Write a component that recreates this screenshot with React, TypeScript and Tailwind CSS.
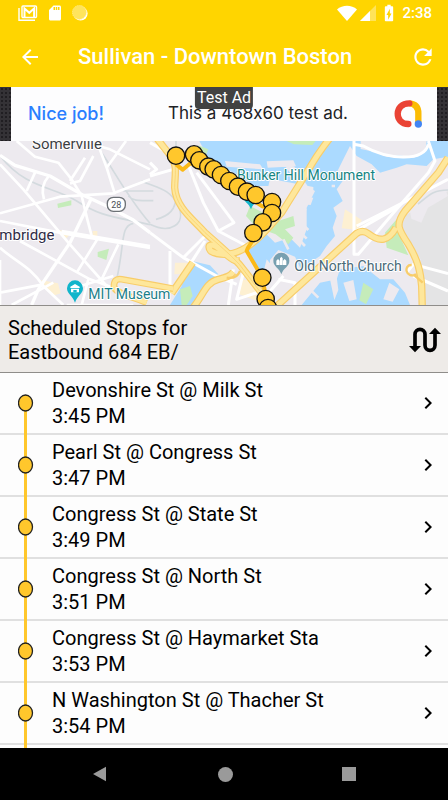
import React from 'react';
import { MdArrowBack, MdRefresh, MdChevronRight, MdSdCard, MdBatteryChargingFull } from 'react-icons/md';

interface Stop {
  name: string;
  time: string;
}

const stops: Stop[] = [
  { name: 'Devonshire St @ Milk St', time: '3:45 PM' },
  { name: 'Pearl St @ Congress St', time: '3:47 PM' },
  { name: 'Congress St @ State St', time: '3:49 PM' },
  { name: 'Congress St @ North St', time: '3:51 PM' },
  { name: 'Congress St @ Haymarket Sta', time: '3:53 PM' },
  { name: 'N Washington St @ Thacher St', time: '3:54 PM' },
];

const markers = [
  [78, 59], [132, 55], [148, 73], [175, 92], [191, 100], [213, 117], [238, 135], [264, 152],
  [291, 167], [317, 177], [366, 198], [366, 231], [338, 259], [310, 291], [337, 425], [347, 489], [354, 516],
];

const highways = [
  'M15 0 L62 60 C84 85 74 120 74 155 C78 215 130 250 165 290 C205 325 240 355 268 385 C300 425 335 470 370 520',
  'M545 0 C520 30 490 75 470 110 L395 230 C355 275 320 320 275 342 C240 360 205 358 182 345 C168 325 185 318 215 345 C240 365 262 385 258 365',
  'M125 520 C160 480 165 440 205 430 C230 424 240 420 250 408',
  'M65 472 L128 380',
  'M375 515 L620 292 Q638 280 655 293 C690 320 715 315 738 275',
  'M894 65 L865 110 L765 225 C735 265 745 280 775 325 C805 375 812 410 815 450 L817 520',
];

const leftHighways = [
  'M342 455 Q340 425 365 430 L465 448 L520 458',
  'M342 455 C355 475 390 480 440 500',
];

function StatusBar() {
  return (
    <div className="flex h-[26px] items-center justify-between pl-[18px] pr-4 text-white">
      <div className="flex items-center gap-2">
        <svg viewBox="0 0 20 16" className="h-4 w-5" fill="none" stroke="currentColor">
          <path d="M1 3v12.2H17" strokeWidth="1.4" />
          <rect x="4" y="1" width="14.5" height="11.5" rx="1" strokeWidth="1.4" />
          <path d="M6.5 12V3.5l4.8 4.3 4.8-4.3V12" strokeWidth="2" />
        </svg>
        <MdSdCard className="size-[18px]" />
        <svg viewBox="0 0 16 16" className="size-4">
          <circle cx="8.6" cy="8.6" r="7" fill="#fff" />
          <circle cx="7.4" cy="7.4" r="7" fill="#ffe45c" stroke="#ffed96" strokeDasharray="1 1" />
        </svg>
      </div>
      <div className="flex items-center gap-[3px]">
        <svg viewBox="0 0 20 16" className="h-4 w-5" fill="currentColor">
          <path d="M0 4.5C5.5-.4 14.5-.4 20 4.5L10 16z" />
        </svg>
        <svg viewBox="0 0 16 16" className="size-4" fill="currentColor">
          <path d="M16 0v16H0z" opacity=".35" />
          <path d="M10 6v10H0z" />
        </svg>
        <MdBatteryChargingFull className="size-5" />
        <span className="text-[15px] font-medium leading-6">2:38</span>
      </div>
    </div>
  );
}

function TestAd() {
  return (
    <div className="bg-[#343236] bg-[radial-gradient(#201e22_1px,transparent_1px)] bg-[length:4px_4px] px-[11px]">
      <div className="relative flex h-[54px] items-center bg-[#fdfdfe] pl-[17px] pr-[15px] font-['Inter',sans-serif] [font-feature-settings:'calt'_0]">
        <span className="text-lg font-medium text-[#2a7fff]">Nice job!</span>
        <span className="ml-16 flex-1 text-[17px] text-[#202124]">This a 468x60 test ad.</span>
        <svg viewBox="0 0 84 84" className="size-7" fill="none" strokeWidth="19">
          <path d="M46 10 Q73 12 73 40 V66" stroke="#fbbc04" />
          <path d="M46 10 C0 10 0 72 43 72" stroke="#ea4335" strokeLinecap="round" />
          <circle cx="73" cy="72" r="11" fill="#4285f4" />
        </svg>
        <span className="absolute left-1/2 top-0 -translate-x-1/2 whitespace-nowrap rounded-b bg-[#424242] px-0.5 font-['Roboto',sans-serif] text-base leading-[22px] text-white">
          Test Ad
        </span>
      </div>
    </div>
  );
}

function RouteMap() {
  return (
    <svg
      viewBox="0 15 1344 492"
      preserveAspectRatio="xMidYMid slice"
      className="block h-[164px] w-full font-['Roboto',sans-serif]"
      role="img"
      aria-label="Route map"
      fill="none"
      strokeLinejoin="round"
    >
      <rect y="0" width="1344" height="520" fill="#edeaef" />

      {/* left half: Somerville and Cambridge */}
      <path d="M172 203l42-10v15l-40 8zM293 348l34-10-8 34-26-10z" fill="#c5ecba" />
      <path d="M122 432l52 10 8 30-24 8zM278 285h14v20h-14zM170 280l45 12-20 18z" fill="#fdf0d2" />
      <g stroke="#d3dade" strokeWidth="5">
        <path d="M0 60C80 160 160 150 230 195S330 240 450 266" />
        <path d="M305 50C340 100 380 180 450 262M370 165h90M385 180c20 20 40 12 75 14M350 430C375 320 360 270 400 262" />
        <path d="M450 265c60 30 110 0 85-55s-70-55-110-75" />
        <path d="M528 0v180c0 40-20 60-60 70" />
      </g>
      <g stroke="#fff" strokeWidth="8">
        <path d="M0 58L45 88L150 120L250 178L320 210L400 252L450 290" strokeWidth="10" />
        <path d="M0 85L70 160L205 320L320 450" />
        <path d="M0 232L180 182L340 172L450 130" />
        <path d="M50 15L105 62L175 80L215 130L245 180L262 250L275 300" />
        <path d="M290 15L320 95L345 175M378 15L320 95M240 15L330 40L450 100" />
        <path d="M105 110L80 165M145 122Q120 150 132 190M280 60L240 135L210 142M255 65L210 135" />
        <path d="M0 255L190 292L450 336M185 285L450 330" />
        <path d="M275 185L210 320L115 460L95 507" strokeWidth="10" />
        <path d="M0 335C50 380 90 390 130 450L190 507M60 315L270 430L340 455" />
        <path d="M0 372V507M0 470L130 445M35 507L160 440M295 305L230 410M355 325L305 430M265 430L245 507" />
        <path d="M210 460L340 420M200 507h200" />
      </g>

      {/* right half: Charlestown, the harbor and East Boston */}
      <g transform="translate(450 0)">
        <g fill="#abdaff">
          <path d="M140 0H894V62L850 70L830 90L770 85L740 95L690 110L665 85L620 60L600 30L580 70L560 110L585 125L560 160L578 195L550 215L560 240L548 275L555 300L530 330L510 360L450 400L390 440L375 400L350 370L335 430L290 345L310 300L345 290L375 320L420 305L450 335L470 280L470 215L495 165L470 150L310 150L260 115L180 75z" />
          <path d="M60 507L95 450L90 415L125 375L180 388L205 415L165 450L135 507z" />
          <path d="M455 507L510 440L560 430L570 400L640 390L690 430L730 430L765 470L780 507z" />
        </g>
        <g fill="#edeaef">
          <path d="M225 75l105 10 10 15-110-8zM350 76l80-3 8 18-85 4zM405 90l25-2 45 65-20 4zM360 128l130 25v18l-135-20zM430 180l60 5-8 22-60-6z" />
          <path d="M380 210l90 10-8 20-55 10-60 40 20-40z" />
          <path d="M632 15H830l-4 28-34 22-50-8-30 6-40-16-40-8z" />
          <path d="M360 372l25-30 50 20 20 42-65 50-30-20z" />
          <path d="M580 440l30-8 10 58-22 5zM540 430l20-8 5 40-12 30zM700 490l18-50 30 20-20 37z" />
        </g>
        <g fill="#c5ecba">
          <path d="M410 15h87l-10 12-55-2zM145 28l30 12-6 14-20-10zM300 210l60 30-40 35-32-35z" />
          <path d="M350 285l35-30 45-15 5 30-30 10 25 25-15 20-38-30zM770 215L705 290L710 335L775 358L745 290zM640 440l30 20-22 45-20-12z" />
          <path d="M90 460l30-10 8 30-18 27H95z" />
        </g>
        <path d="M585 220l50 32-10 30-50-5zM75 380h40l-8 35h-34zM270 430l45 5 8 60-55-20z" fill="#fdf0d2" />
        <path d="M894 165L850 200L770 235L752 275L812 370L825 520H894z" fill="#e4e4e5" />
        <path d="M780 225l45-35 60-30 9 20-60 35-20 45-30-12z" fill="#edeaef" />
        <g stroke="#edeaef" strokeWidth="8">
          <path d="M425 288l40 42M440 278l30 30M455 262l20 20M400 310l15 30M555 150h-10M480 460l25 25" />
        </g>
        <path d="M894 162c-50 0-60 20-90 42" stroke="#d3dade" strokeWidth="5" />
        <g stroke="#fff" strokeWidth="9">
          <path d="M612 15V355L625 355L735 225L835 110L855 75L835 15M612 25L640 30C710 70 820 80 835 25" />
          <path d="M620 270L720 220L894 130M610 290L740 215" />
          <path d="M116 90L160 200L205 285L290 330M140 110L252 260L205 285M0 120L70 100M0 20L70 60" />
          <path d="M0 290L100 365L200 420L260 445M60 345L60 450M165 315L120 385M100 365L165 300" />
          <path d="M250 400L235 507M280 410L260 490L320 470M385 430l50 10v70M330 500l70-80" />
          <path d="M770 410l20-25 104 28M790 420l104 45" />
          <path d="M0 80l20 20-20 15" />
        </g>
        <g stroke="#f8cd6a" strokeWidth="22">
          {highways.map((d) => <path key={d} d={d} />)}
        </g>
        <g stroke="#fee79b" strokeWidth="15">
          {highways.map((d) => <path key={d} d={d} />)}
        </g>
        <g stroke="#f8cd6a" strokeWidth="2">
          <path d="M62 60C84 85 74 120 74 155C78 215 130 250 165 290C205 325 240 355 268 385L370 520" />
        </g>
        <path d="M800 415c-35 15-40-30-15-28M790 415l28 25M230 425q30 5 40-20" stroke="#f8cd6a" strokeWidth="7" />
      </g>
      <g stroke="#f8cd6a" strokeWidth="20">
        {leftHighways.map((d) => <path key={d} d={d} />)}
      </g>
      <g stroke="#fee79b" strokeWidth="13">
        {leftHighways.map((d) => <path key={d} d={d} />)}
      </g>

      <rect x="322" y="184" width="54" height="42" rx="18" fill="#fff" stroke="#6d7277" strokeWidth="4" />
      <text x="349" y="215" fontSize="27" textAnchor="middle" fill="#4d5156">28</text>

      <path d="M225 500c-8-22-24-26-24-43a24 24 0 0 1 48 0c0 17-16 21-24 43z" fill="#12b5cb" />
      <path d="M211 452l14-8 14 8v4h-28zM213 458h24v11h-24z" fill="#fff" />
      <path d="M220 469v-7h10v7" fill="#12b5cb" />
      <path d="M844 415c-6-20-24-22-24-41a24 24 0 0 1 48 0c0 19-18 21-24 41z" fill="#78a0b0" />
      <path d="M829 387v-13l5-5 5 5v13zM840 387v-20l4-5 4 5v20zM849 387v-13l5-5 5 5v13z" fill="#fff" />
      <path d="M753 220c-6-20-24-22-24-41a24 24 0 0 1 48 0c0 19-18 21-24 41z" fill="#12b5cb" />

      <g stroke="#fff" strokeWidth="6" paintOrder="stroke" fontSize="42">
        <text x="96" y="39" fontSize="45" fill="#3c4043">Somerville</text>
        <text x="-2" y="312" fontSize="45" fill="#2f2b45">mbridge</text>
        <text x="265" y="488" fill="#1c808a">MIT Museum</text>
        <text x="711" y="132" fill="#168583">Bunker Hill Monument</text>
        <text x="883" y="405" fill="#4a6a78">Old North Church</text>
      </g>

      <g transform="translate(450 0)">
        <path d="M78 85l20 16 24-20 110 62 105 68 30 6-37 62-37 58L290 345l47 80 17 91" stroke="#fbb917" strokeWidth="12" />
        {markers.map(([x, y]) => (
          <circle key={y} cx={x} cy={y} r="26" fill="#ffc72c" stroke="#111" strokeWidth="4" />
        ))}
      </g>
    </svg>
  );
}

function StopRow({ stop, first }: { stop: Stop; first: boolean }) {
  return (
    <li className="border-b-2 border-[#e0e0e0]">
      <a href="#stop" className="flex h-[60px] items-center pr-2">
        {/* timeline, pulled over the row border so that the line is unbroken */}
        <span className="relative flex w-[52px] items-center justify-center self-stretch">
          <span className={`absolute -bottom-0.5 left-6 w-[3px] bg-[#ffc72c] ${first ? 'top-1/2' : 'top-0'}`} />
          <svg viewBox="0 0 16 18" className="relative h-[18px] w-4">
            <ellipse cx="7.5" cy="9" rx="7" ry="8" fill="#ffc72c" stroke="#222" strokeWidth="1.3" />
          </svg>
        </span>
        <span className="flex-1 text-xl leading-[26px]">
          <span className="block">{stop.name}</span>
          <span className="block">{stop.time}</span>
        </span>
        <MdChevronRight className="size-6" />
      </a>
    </li>
  );
}

export default function App() {
  return (
    <div className="flex h-screen flex-col bg-[#fdfdfd] font-['Roboto',sans-serif] text-black">
      <header className="shrink-0 bg-[#ffd500] text-white">
        <StatusBar />
        <div className="flex h-[61px] items-center pl-[18px] pr-3">
          <button type="button" aria-label="Back">
            <MdArrowBack className="size-6" />
          </button>
          <h1 className="flex-1 pl-9 text-[22px] font-medium">Sullivan - Downtown Boston</h1>
          <button type="button" aria-label="Refresh">
            <MdRefresh className="size-[26px]" />
          </button>
        </div>
      </header>

      <TestAd />
      <RouteMap />

      <section className="flex shrink-0 items-center justify-between border-y border-[#8f8d8a] bg-[#eeebe8] pb-2 pl-2 pr-[7px] pt-2.5">
        <h2 className="w-52 text-xl leading-6">Scheduled Stops for Eastbound 684 EB/</h2>
        <button type="button" aria-label="Reverse direction">
          <svg viewBox="0 0 96 76" className="h-[26px] w-8" fill="none" stroke="#000" strokeWidth="11">
            <path d="M18 60V21a15 15 0 0 1 30 0V54a15 15 0 0 0 30 0V15" />
            <path d="M0 56h36L18 75zM60 20h36L78 1z" fill="#000" stroke="none" />
          </svg>
        </button>
      </section>

      <main className="min-h-0 flex-1 overflow-hidden">
        <ul>
          {stops.map((stop, i) => (
            <StopRow key={stop.name} stop={stop} first={i === 0} />
          ))}
        </ul>
        <div className="ml-6 h-4 w-[3px] bg-[#ffc72c]" />
      </main>

      <nav className="flex h-[52px] shrink-0 items-center justify-between bg-black px-[92px] text-[#9a9a9a]">
        <button type="button" aria-label="System back">
          <svg viewBox="0 0 16 16" className="size-4" fill="currentColor">
            <path d="M14 .8v14.4L1 8z" />
          </svg>
        </button>
        <button type="button" aria-label="Home">
          <span className="block size-[15px] rounded-full bg-current" />
        </button>
        <button type="button" aria-label="Recent apps">
          <span className="block size-3.5 bg-current" />
        </button>
      </nav>
    </div>
  );
}
